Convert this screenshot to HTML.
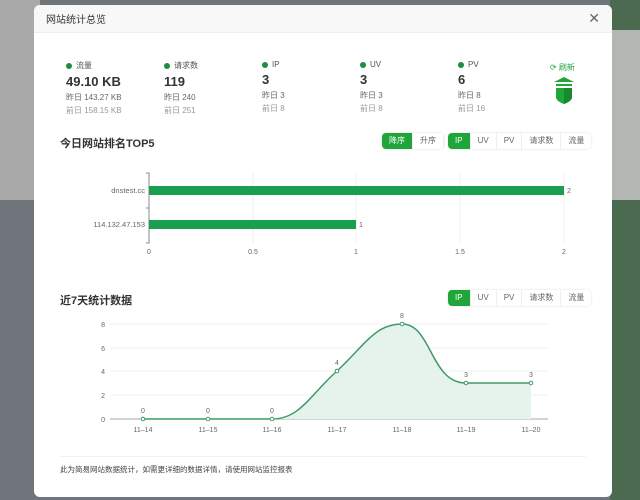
<!DOCTYPE html>
<html><head><meta charset="utf-8"><style>
*{margin:0;padding:0;box-sizing:border-box}
body{width:640px;height:500px;overflow:hidden;position:relative;font-family:"Liberation Sans","Noto Sans CJK SC",sans-serif;background:#6f757b}
.bgl{position:absolute;left:0;top:0;width:40px;height:200px;background:#a9a9a9}
.bgr{position:absolute;left:610px;top:0;width:30px;height:500px;background:#4b6a4f}
.bgr2{position:absolute;left:610px;top:30px;width:30px;height:170px;background:#b4b6b3}
.modal{position:absolute;left:34px;top:5px;width:578px;height:492px;background:#fff;border-radius:6px;overflow:hidden}
.hd{height:28px;background:#f8f8f8;border-bottom:1px solid #eee;font-size:10px;color:#333;padding:6px 0 0 12px}
.x{position:absolute;right:12px;top:5px;font-size:14px;color:#666}
.st{position:absolute;top:55px;font-size:8px;color:#666}
.st .l{display:flex;align-items:center;gap:4px;font-size:8px;color:#555}
.st .l i{width:6px;height:6px;border-radius:50%;background:#1e8e3e;display:inline-block}
.st .v{font-size:13px;color:#333;margin-top:3px;font-weight:bold}
.st .y{margin-top:3px;color:#666}
.st .p{margin-top:2px;color:#999}
.t{position:absolute;font-size:11px;color:#333;font-weight:bold}
.btns{position:absolute;display:flex;font-size:8px;color:#666;border-radius:4px;overflow:hidden;box-shadow:0 0 2px #ddd}
.btns span{padding:0 7px;height:16px;line-height:16px;background:#fff;border-right:1px solid #eee}
.btns span.on{background:#20a53a;color:#fff}
.foot{position:absolute;left:26px;top:459px;font-size:7.5px;color:#444}
.sep{position:absolute;left:26px;right:26px;top:451px;height:1px;background:#f2f2f2}
</style></head><body>
<div class="bgl"></div><div class="bgr"></div><div class="bgr2"></div>
<div class="modal">
<div class="hd">网站统计总览</div><div class="x">✕</div>
<div class="st" style="left:32px"><div class="l"><i></i>流量</div><div class="v">49.10 KB</div><div class="y">昨日 143.27 KB</div><div class="p">前日 158.15 KB</div></div>
<div class="st" style="left:130px"><div class="l"><i></i>请求数</div><div class="v">119</div><div class="y">昨日 240</div><div class="p">前日 251</div></div>
<div class="st" style="left:228px"><div class="l"><i></i>IP</div><div class="v">3</div><div class="y">昨日 3</div><div class="p">前日 8</div></div>
<div class="st" style="left:326px"><div class="l"><i></i>UV</div><div class="v">3</div><div class="y">昨日 3</div><div class="p">前日 8</div></div>
<div class="st" style="left:424px"><div class="l"><i></i>PV</div><div class="v">6</div><div class="y">昨日 8</div><div class="p">前日 16</div></div>
<div style="position:absolute;left:516px;top:57px;font-size:8px;color:#20a53a">⟳ 刷新</div>
<svg style="position:absolute;left:518px;top:70px" width="24" height="30" viewBox="0 0 24 30"><path d="M12 2 L2 7 H22Z M4 9 H20 V11 H4Z" fill="#20a53a"/><path d="M4 13 H20 V22 Q20 26 12 29 Q4 26 4 22Z" fill="#20a53a"/><path d="M12 13 H20 V22 Q20 26 12 29Z" fill="#178a2e"/></svg>
<div class="t" style="left:26px;top:130px">今日网站排名TOP5</div>
<div class="btns" style="left:348px;top:128px"><span class="on">降序</span><span>升序</span></div>
<div class="btns" style="left:414px;top:128px"><span class="on">IP</span><span>UV</span><span>PV</span><span>请求数</span><span style="border:0">流量</span></div>
<div class="t" style="left:26px;top:287px">近7天统计数据</div>
<div class="btns" style="left:414px;top:285px"><span class="on">IP</span><span>UV</span><span>PV</span><span>请求数</span><span style="border:0">流量</span></div>
<div class="sep"></div>
<div class="foot">此为简易网站数据统计，如需更详细的数据详情，请使用网站监控报表</div>
</div>
<svg style="position:absolute;left:0;top:0" width="640" height="500" font-family="Liberation Sans, sans-serif" font-size="7" fill="#666">
<g stroke="#eee" stroke-width="1"><line x1="253" y1="173" x2="253" y2="243"/><line x1="356" y1="173" x2="356" y2="243"/><line x1="460" y1="173" x2="460" y2="243"/><line x1="564" y1="173" x2="564" y2="243"/></g>
<path d="M146 173H149V243H146M146 208H149" stroke="#888" fill="none"/>
<rect x="149" y="186" width="415" height="9" fill="#1a9e4f"/>
<rect x="149" y="220" width="207" height="9" fill="#1a9e4f"/>
<text x="145" y="193" text-anchor="end" font-size="7.5">dnstest.cc</text>
<text x="145" y="227" text-anchor="end" font-size="7.5">114.132.47.153</text>
<text x="567" y="193">2</text><text x="359" y="227">1</text>
<g text-anchor="middle"><text x="149" y="254">0</text><text x="253" y="254">0.5</text><text x="356" y="254">1</text><text x="460" y="254">1.5</text><text x="564" y="254">2</text></g>
<g stroke="#f0f0f0"><line x1="110" y1="324" x2="548" y2="324"/><line x1="110" y1="348" x2="548" y2="348"/><line x1="110" y1="371" x2="548" y2="371"/><line x1="110" y1="395" x2="548" y2="395"/></g>
<line x1="110" y1="419" x2="548" y2="419" stroke="#aaa"/>
<g text-anchor="end"><text x="105" y="327">8</text><text x="105" y="351">6</text><text x="105" y="374">4</text><text x="105" y="398">2</text><text x="105" y="422">0</text></g>
<path d="M143 419 L272 419 C300 419 310 395 337 371 C365 345 375 324 402 324 C432 324 430 383 466 383 L531 383 L531 419Z" fill="#e6f3ea"/>
<path d="M143 419 L272 419 C300 419 310 395 337 371 C365 345 375 324 402 324 C432 324 430 383 466 383 L531 383" stroke="#3f9a6b" stroke-width="1.5" fill="none"/>
<g fill="#fff" stroke="#3f9a6b" stroke-width="1"><circle cx="143" cy="419" r="1.8"/><circle cx="208" cy="419" r="1.8"/><circle cx="272" cy="419" r="1.8"/><circle cx="337" cy="371" r="1.8"/><circle cx="402" cy="324" r="1.8"/><circle cx="466" cy="383" r="1.8"/><circle cx="531" cy="383" r="1.8"/></g>
<g text-anchor="middle"><text x="143" y="413">0</text><text x="208" y="413">0</text><text x="272" y="413">0</text><text x="337" y="365">4</text><text x="402" y="318">8</text><text x="466" y="377">3</text><text x="531" y="377">3</text>
<text x="143" y="432">11–14</text><text x="208" y="432">11–15</text><text x="272" y="432">11–16</text><text x="337" y="432">11–17</text><text x="402" y="432">11–18</text><text x="466" y="432">11–19</text><text x="531" y="432">11–20</text></g>
</svg>
</body></html>
